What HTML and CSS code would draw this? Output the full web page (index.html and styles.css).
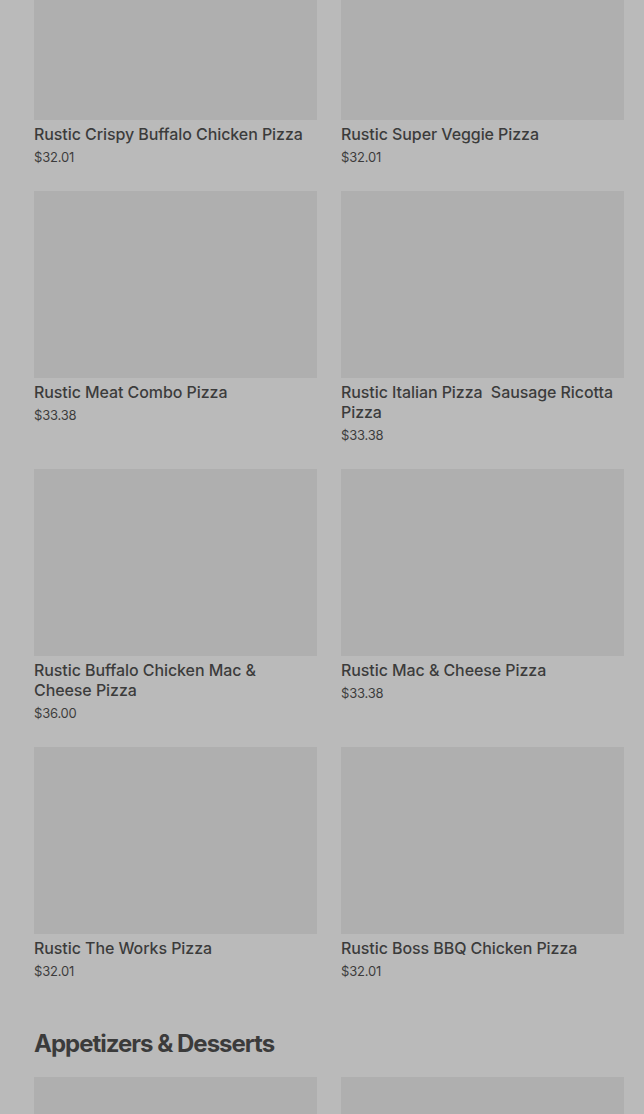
FILE: index.html
```html
<!DOCTYPE html>
<html lang="en">
<head>
    <meta charset="UTF-8">
    <meta name="viewport" content="width=device-width, initial-scale=1.0">
    <title>Menu</title>
    <link rel="stylesheet" href="styles.css">
</head>
<body>
    <div class="menu">
        <section class="menu-section first">
            <div class="item-grid">
                <div class="item">
                    <div class="item-img"></div>
                    <div class="item-name">Rustic Crispy Buffalo Chicken Pizza</div>
                    <div class="item-price">$32.01</div>
                </div>
                <div class="item">
                    <div class="item-img"></div>
                    <div class="item-name">Rustic Super Veggie Pizza</div>
                    <div class="item-price">$32.01</div>
                </div>
                <div class="item">
                    <div class="item-img"></div>
                    <div class="item-name">Rustic Meat Combo Pizza</div>
                    <div class="item-price">$33.38</div>
                </div>
                <div class="item">
                    <div class="item-img"></div>
                    <div class="item-name">Rustic Italian Pizza&nbsp; Sausage Ricotta Pizza</div>
                    <div class="item-price">$33.38</div>
                </div>
                <div class="item">
                    <div class="item-img"></div>
                    <div class="item-name">Rustic Buffalo Chicken Mac &amp; Cheese Pizza</div>
                    <div class="item-price">$36.00</div>
                </div>
                <div class="item">
                    <div class="item-img"></div>
                    <div class="item-name">Rustic Mac &amp; Cheese Pizza</div>
                    <div class="item-price">$33.38</div>
                </div>
                <div class="item">
                    <div class="item-img"></div>
                    <div class="item-name">Rustic The Works Pizza</div>
                    <div class="item-price">$32.01</div>
                </div>
                <div class="item">
                    <div class="item-img"></div>
                    <div class="item-name">Rustic Boss BBQ Chicken Pizza</div>
                    <div class="item-price">$32.01</div>
                </div>
            </div>
        </section>

        <section class="menu-section">
            <h2>Appetizers &amp; Desserts</h2>
            <div class="item-grid">
                <div class="item">
                    <div class="item-img"></div>
                </div>
                <div class="item">
                    <div class="item-img"></div>
                </div>
            </div>
        </section>
    </div>

    <!-- abgedunkelter Hintergrund hinter einem Dialog -->
    <div class="overlay"></div>
</body>
</html>
```

FILE: styles.css
```css
body {
    margin: 0;
    background: #ffffff;
    color: #000000;
    font-family: Inter, "Noto Sans", sans-serif;
    overflow: hidden;
    height: 1114px;
}
.menu {
    padding: 0 20px 0 34px;
}
.menu-section.first {
    margin-top: -67px;
}
.menu-section h2 {
    margin: 47px 0 17px;
    font-size: 24px;
    line-height: 32px;
    font-weight: 700;
    letter-spacing: -1px;
}
.item-grid {
    display: grid;
    grid-template-columns: 1fr 1fr;
    column-gap: 24px;
    row-gap: 24px;
}
.item-img {
    height: 187px;
    background: #e9e9e9;
}
.item-name {
    margin-top: 4px;
    padding-right: 4px;
    font-size: 16px;
    line-height: 20px;
    font-weight: 500;
    letter-spacing: -0.08px;
}
.item-price {
    margin-top: 3px;
    font-size: 13px;
    line-height: 20px;
    letter-spacing: -0.2px;
}
.overlay {
    position: fixed;
    top: 0;
    left: 0;
    width: 100%;
    height: 100%;
    background-color: rgba(118, 118, 118, 0.5);
}
```
